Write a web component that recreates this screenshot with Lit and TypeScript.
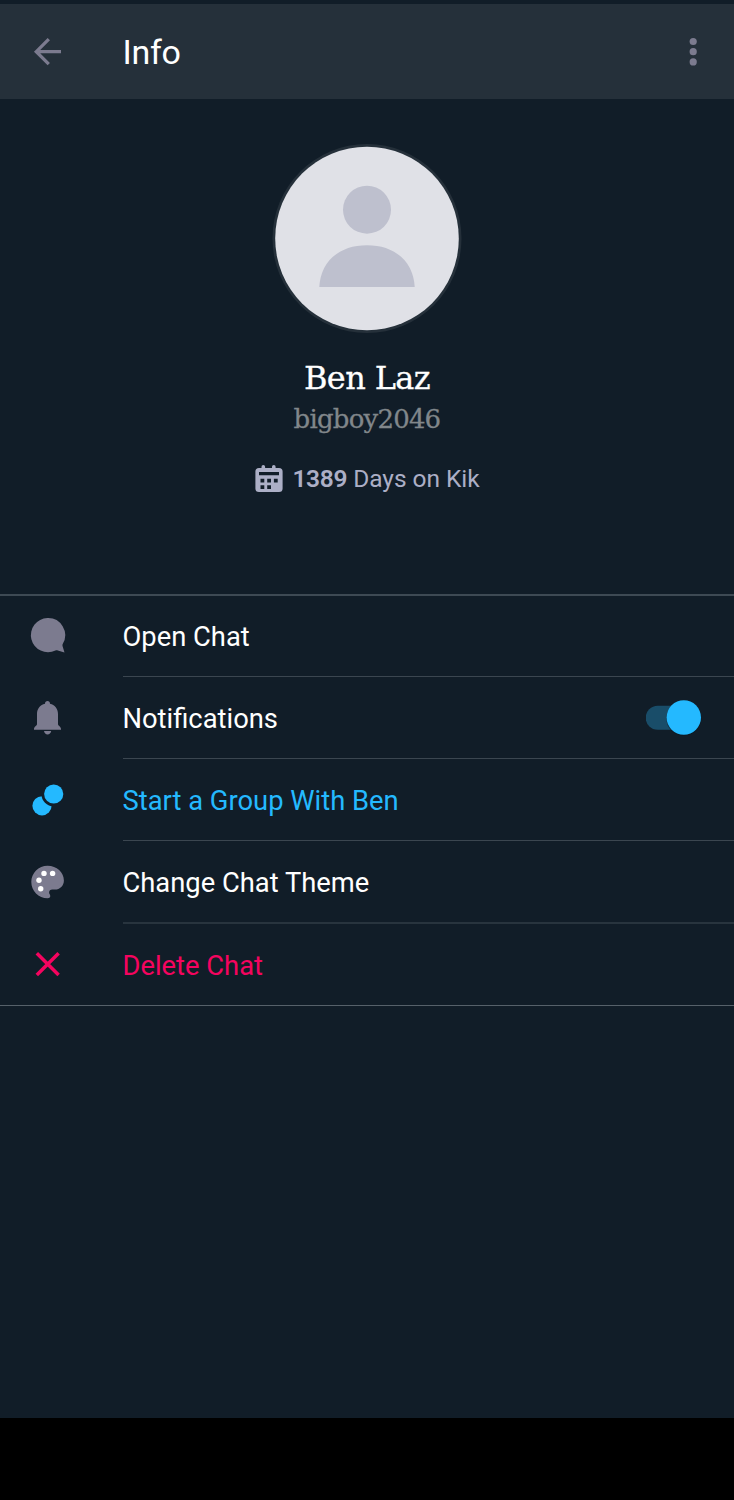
import { LitElement, html, svg, css } from "lit";
import { customElement } from "lit/decorators.js";

const chat = svg`<path fill="#7c7b8f" d="M47.400 22a17.100 17.100 0 1 0 8 32.500c.8-.4 1.600-.4 2.400-.1l6.700 2-1.900-6.200c-.3-.9-.2-1.500.1-2.300A17.100 17.100 0 0 0 47.400 22z"/>`;
const bell = svg`<path fill="#7c7b8f" d="M47.500 24c-1.500 0-2.500 1-2.500 2.800-4.700 1.200-8 4.800-8 10.200v10c0 2-3 2.500-3 5v.8h27V52c0-2.500-3-3-3-5V37c0-5.400-3.300-9-8-10.200 0-1.800-1-2.800-2.500-2.800zM44 54h7.200c-.4 2.300-1.800 3.500-3.600 3.500S44.400 56.300 44 54z"/>`;
const group = svg`<mask id="gap"><rect width="96" height="82" fill="#fff"/><circle cx="53.700" cy="35" r="12.300" fill="#000"/></mask><circle cx="53.700" cy="35" r="9.600" fill="#24b9ff"/><circle cx="42" cy="46.800" r="9.600" fill="#24b9ff" mask="url(#gap)"/>`;
const palette = svg`<path fill="#7c7b8f" d="M47.600 24.700C38.500 24.700 31.300 32 31.300 41s7.200 16.300 16.300 16.300c2 0 3-1.200 2.600-2.700-.2-1-1.100-1.700-1.100-3 0-1.900 1.300-3 3.200-3h2.500c5.200 0 9.100-3.900 9.100-9.100 0-8.300-7.200-14.800-16.300-14.800z"/><g fill="#fff"><circle cx="44" cy="32.400" r="2.700"/><circle cx="52.600" cy="32.400" r="2.700"/><circle cx="39" cy="39.200" r="2.700"/><circle cx="40.700" cy="47.700" r="2.700"/></g>`;
const cross = svg`<path fill="none" stroke="#f5045f" stroke-width="3.500" d="M36.800 29.300 58.600 51.100M58.600 29.300 36.800 51.100"/>`;

const rows = [
  { label: "Open Chat", icon: chat, cls: "r1" },
  { label: "Notifications", icon: bell, cls: "r2", toggle: true },
  { label: "Start a Group With Ben", icon: group, cls: "r3" },
  { label: "Change Chat Theme", icon: palette, cls: "r4" },
  { label: "Delete Chat", icon: cross, cls: "r5" },
];

@customElement("app-root")
export class AppRoot extends LitElement {
  static styles = css`
    :host { display: flex; flex-direction: column; width: 734px; height: 1500px; background: #111d28; color: #fff; font-family: Roboto, sans-serif; overflow: hidden; box-sizing: border-box; padding-top: 4px; }
    svg { display: block; flex: none; }
    header { height: 95px; flex: none; background: #25303a; display: flex; align-items: center; }
    h1 { flex: 1; margin: 0 0 0 26.500px; font-size: 34px; font-weight: 400; line-height: 40px; letter-spacing: -0.300px; }
    .profile { height: 495px; flex: none; display: flex; flex-direction: column; align-items: center; }
    .avatar { margin-top: 44px; }
    .name { margin-top: 24px; font-family: "Roboto Slab", "DejaVu Serif", serif; font-size: 32px; letter-spacing: -0.600px; line-height: 42px; white-space: nowrap; -webkit-text-stroke: 0.300px #fff; }
    .user { margin-top: 2px; font-family: "Roboto Slab", "DejaVu Serif", serif; font-size: 26px; letter-spacing: -0.800px; line-height: 36px; color: #81878b; white-space: nowrap; -webkit-text-stroke: 0.300px #81878b; }
    .days { margin-top: 27px; display: flex; align-items: center; gap: 9px; font-size: 24.500px; line-height: 30px; color: #acafc6; white-space: nowrap; padding-left: 1px; letter-spacing: -0.050px; }
    .days b { font-weight: 600; letter-spacing: -0.300px; }
    .list { flex: none; border-top: 2px solid #3e4a54; border-bottom: 1px solid #56616a; }
    .row { display: flex; align-items: stretch; }
    .cell { flex: 1; margin-left: 26.500px; display: flex; align-items: center; justify-content: space-between; border-bottom: 1px solid #3b4650; font-size: 27.350px; line-height: 32px; box-sizing: border-box; padding-top: 1px; }
    .r1 { height: 81px; }
    .r2, .r3 { height: 82px; }
    .r4 { height: 83px; }
    .r5 { height: 81px; }
    .r2 .cell, .r3 .cell, .r5 .cell { padding-top: 2px; }
    .r4 .cell { padding-top: 3px; }
    .r4 .cell { border-bottom: 2px solid #28343e; }
    .r5 .cell { border-bottom: 0; }
    .r3 { color: #24b9ff; }
    .r5 { color: #f5045f; }
    .toggle { margin-right: 28px; }
    .rest { flex: 1; }
    .nav { height: 82px; flex: none; background: #000; }
  `;

  render() {
    return html`
      <header>
        <svg width="96" height="95" viewBox="0 0 96 95" fill="none" stroke="#7c7b8f" stroke-width="3.300"><path d="M61 47.700H36.500M48.800 35.200 36.300 47.700 48.800 60.200"/></svg>
        <h1>Info</h1>
        <svg width="82" height="95" viewBox="0 0 82 95" fill="#7c7b8f"><circle cx="41.200" cy="37.500" r="3.600"/><circle cx="41.200" cy="47.700" r="3.600"/><circle cx="41.200" cy="57.900" r="3.600"/></svg>
      </header>
      <section class="profile">
        <svg class="avatar" width="190" height="190" viewBox="0 0 190 190"><circle cx="95" cy="95.500" r="94.500" fill="#25303a"/><circle cx="95" cy="95.500" r="91.800" fill="#e0e1e7"/><g fill="#bec0ce"><circle cx="95" cy="66.700" r="24"/><path d="M47.300 144C48.500 119.500 66 102.200 95 102.200S141.500 119.500 142.700 144z"/></g></svg>
        <div class="name">Ben Laz</div>
        <div class="user">bigboy2046</div>
        <div class="days">
          <svg width="28" height="28" viewBox="0 0 28 28"><path fill="#acafc6" fill-rule="evenodd" d="M6.500 3V1.800a1.800 1.800 0 0 1 3.600 0V3H17V1.800a1.800 1.800 0 0 1 3.600 0V3H24a3.600 3.600 0 0 1 3.600 3.600V23.500A3.600 3.600 0 0 1 24 27.100H4A3.600 3.600 0 0 1 .4 23.500V6.600A3.600 3.600 0 0 1 4 3zM4 7v3.200h20V7zM5.500 13.800v3.800h3.800v-3.800zM12.200 13.800v3.800H16v-3.800zM18.900 13.800v3.800h3.800v-3.800zM5.500 20.300v3.800h3.800v-3.800zM12.200 20.300v3.800H16v-3.800z"/></svg>
          <span><b>1389</b> Days on Kik</span>
        </div>
      </section>
      <main class="list">
        ${rows.map((r) => html`<div class="row ${r.cls}">
          <svg width="96" height="80" viewBox="0 0 96 80">${r.icon}</svg>
          <div class="cell"><span>${r.label}</span>${r.toggle
            ? html`<svg class="toggle" width="60" height="42" viewBox="0 0 60 42"><rect x="-.300" y="7.700" width="50" height="24" rx="12" fill="#194d69"/><circle cx="37.800" cy="20.500" r="17.400" fill="#0b1721" opacity=".6"/><circle cx="37.800" cy="19.500" r="17.200" fill="#24b9ff"/></svg>`
            : ""}</div>
        </div>`)}
      </main>
      <div class="rest"></div>
      <div class="nav"></div>
    `;
  }
}
